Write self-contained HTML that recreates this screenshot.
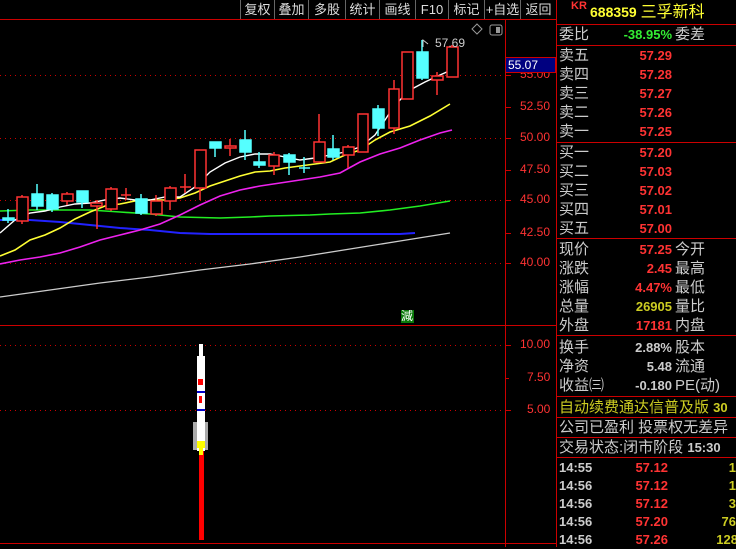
<!DOCTYPE html>
<html><head><meta charset="utf-8"><style>
*{margin:0;padding:0;box-sizing:border-box}
body{width:736px;height:547px;background:#000;overflow:hidden;position:relative;font-family:"Liberation Sans","Noto Sans CJK SC",sans-serif}
.a{position:absolute;white-space:nowrap}
.btn{position:absolute;top:0;height:19px;color:#ddd;font-size:13px;line-height:19px;text-align:center;border-left:1px solid #666}
.lab{position:absolute;left:559px;color:#ccc;font-size:15px;line-height:19px}
.num{position:absolute;font-weight:bold;font-size:13px;line-height:19px;text-align:right}
.r{color:#ff3333}.y{color:#cccc22}.w{color:#ccc}.g{color:#33ee33}
.hl{position:absolute;left:556px;width:180px;height:1px;background:#c00}
</style></head><body>
<svg class="a" style="left:0;top:0" width="736" height="547">
<g stroke="#c00" stroke-width="1">
<line x1="0" y1="19.5" x2="556" y2="19.5"/>
<line x1="505.5" y1="19" x2="505.5" y2="547"/>
<line x1="556.5" y1="0" x2="556.5" y2="547"/>
<line x1="0" y1="325.5" x2="556" y2="325.5"/>
<line x1="0" y1="543.5" x2="556" y2="543.5"/>
</g>
<g stroke="#c00" stroke-dasharray="1,4">
<line x1="0" y1="75.5" x2="505" y2="75.5"/><line x1="0" y1="138.5" x2="505" y2="138.5"/>
<line x1="0" y1="200.5" x2="505" y2="200.5"/><line x1="0" y1="263.5" x2="505" y2="263.5"/>
<line x1="0" y1="345.5" x2="505" y2="345.5"/><line x1="0" y1="410.5" x2="505" y2="410.5"/>
</g>
<g stroke="#c00"><line x1="505" y1="75.5" x2="511" y2="75.5"/><line x1="505" y1="107.5" x2="511" y2="107.5"/><line x1="505" y1="138.5" x2="511" y2="138.5"/><line x1="505" y1="170.5" x2="511" y2="170.5"/><line x1="505" y1="200.5" x2="511" y2="200.5"/><line x1="505" y1="233.5" x2="511" y2="233.5"/><line x1="505" y1="263.5" x2="511" y2="263.5"/><line x1="505" y1="345.5" x2="511" y2="345.5"/><line x1="505" y1="378.5" x2="509" y2="378.5"/><line x1="505" y1="410.5" x2="511" y2="410.5"/></g>
<g fill="none" stroke-width="1.3">
<polyline stroke="#ccc" points="0,297 50,290 100,283 150,277 200,270 250,264 300,257 350,249 400,241 450,233"/>
<polyline stroke="#2222ff" stroke-width="2" points="0,220 30,220 60,222 90,225 120,228 150,230 180,233 210,234 250,234 300,234 400,234 415,233"/>
<polyline stroke="#22ee22" stroke-width="1.6" points="0,211 30,210 60,210 90,210 120,212 150,214 180,217 220,218 250,217 270,216 310,215 330,214 360,213 390,210 420,206 450,201"/>
<polyline stroke="#ee22ee" stroke-width="1.6" points="0,264 20,260 40,257 60,253 80,247 100,240 120,235 140,230 160,224 180,215 200,205 220,196 240,190 260,186 280,183 300,180 320,177 340,173 360,162 380,154 400,148 420,140 440,133 452,130"/>
<polyline stroke="#ffff33" stroke-width="1.6" points="0,256 15,250 30,240 45,235 60,228 75,219 90,212 105,206 120,204 135,201 150,200 165,200 180,198 195,193 210,186 225,181 240,176 255,172 270,171 285,168 300,166 315,164 330,162 345,155 360,150 375,140 390,132 410,126 430,116 450,104"/>
<polyline stroke="#fff" stroke-width="1.4" points="0,233 15,220 30,213 45,211 60,207 75,204 90,203 105,200 120,198 135,200 150,200 165,197 180,197 195,187 210,172 225,163 240,157 255,154 270,154 285,157 300,160 315,158 330,155 345,152 360,147 375,135 385,120 395,105 410,90 425,82 440,75 458,67"/>
</g>
<g stroke="#ff3333" fill="#000" stroke-width="1.5">
<line x1="22" y1="195" x2="22" y2="224"/><rect x="17" y="197" width="11" height="24"/>
<line x1="67" y1="192" x2="67" y2="205"/><rect x="62" y="194" width="11" height="7"/>
<line x1="97" y1="200" x2="97" y2="229"/><rect x="91" y="203" width="11" height="3"/>
<line x1="111" y1="187" x2="111" y2="211"/><rect x="106" y="189" width="11" height="20"/>
<line x1="126" y1="188" x2="126" y2="200"/><line x1="121" y1="195" x2="131" y2="195"/>
<line x1="156" y1="195" x2="156" y2="216"/><rect x="151" y="201" width="11" height="13"/>
<line x1="170" y1="186" x2="170" y2="210"/><rect x="165" y="188" width="11" height="13"/>
<line x1="185" y1="174" x2="185" y2="193"/><line x1="180" y1="187" x2="191" y2="187"/>
<line x1="200" y1="150" x2="200" y2="200"/><rect x="195" y="150" width="11" height="38"/>
<line x1="230" y1="139" x2="230" y2="156"/><rect x="225" y="146" width="11" height="2"/>
<line x1="274" y1="152" x2="274" y2="175"/><rect x="269" y="155" width="10" height="11"/>
<line x1="319" y1="114" x2="319" y2="162"/><rect x="314" y="142" width="11" height="20"/>
<line x1="348" y1="145" x2="348" y2="168"/><rect x="343" y="147" width="11" height="8"/>
<rect x="358" y="114" width="10" height="38"/>
<line x1="394" y1="80" x2="394" y2="134"/><rect x="389" y="89" width="10" height="39"/>
<rect x="402" y="52" width="11" height="47"/>
<line x1="437" y1="72" x2="437" y2="95"/><rect x="432" y="76" width="11" height="4"/>
<line x1="452" y1="45" x2="452" y2="77"/><rect x="447" y="47" width="11" height="30"/>
</g>
<g stroke="#55ffff" fill="#55ffff" stroke-width="1.5">
<line x1="8" y1="209" x2="8" y2="223"/><rect x="3" y="218" width="11" height="2"/>
<line x1="37" y1="184" x2="37" y2="210"/><rect x="32" y="194" width="11" height="12"/>
<line x1="52" y1="193" x2="52" y2="212"/><rect x="47" y="195" width="11" height="14"/>
<line x1="82" y1="191" x2="82" y2="208"/><rect x="77" y="191" width="11" height="11"/>
<line x1="141" y1="194" x2="141" y2="215"/><rect x="136" y="199" width="11" height="14"/>
<line x1="215" y1="142" x2="215" y2="157"/><rect x="210" y="142" width="11" height="6"/>
<line x1="245" y1="130" x2="245" y2="160"/><rect x="240" y="140" width="11" height="12"/>
<line x1="259" y1="152" x2="259" y2="168"/><rect x="254" y="162" width="11" height="3"/>
<line x1="289" y1="153" x2="289" y2="175"/><rect x="284" y="155" width="11" height="7"/>
<line x1="304" y1="157" x2="304" y2="173"/><line x1="299" y1="168" x2="310" y2="168"/>
<line x1="333" y1="135" x2="333" y2="160"/><rect x="328" y="149" width="11" height="8"/>
<line x1="378" y1="105" x2="378" y2="136"/><rect x="373" y="109" width="11" height="19"/>
<line x1="422" y1="40" x2="422" y2="80"/><rect x="417" y="52" width="11" height="26"/>
</g>
<path d="M423 47 L423 40 L428 44" stroke="#ccc" fill="none"/>
<path d="M477 24 L482 29 L477 34 L472 29Z" stroke="#999" fill="none"/>
<rect x="490" y="25" width="12" height="10" rx="2" stroke="#999" fill="none"/><rect x="496" y="27" width="4" height="6" fill="#999"/>
<rect x="199" y="400" width="5" height="140" fill="#f00"/>
<rect x="193" y="422" width="15" height="28" fill="#aaa"/>
<rect x="197" y="356" width="8" height="95" fill="#fff"/>
<rect x="199" y="344" width="4" height="14" fill="#fff"/>
<rect x="198" y="379" width="5" height="6" fill="#f00"/>
<rect x="199" y="396" width="3" height="7" fill="#f00"/>
<rect x="197" y="391" width="8" height="2" fill="#00c"/><rect x="197" y="409" width="8" height="2" fill="#00c"/>
<rect x="197" y="441" width="8" height="7" fill="#ff0"/><rect x="199" y="448" width="4" height="7" fill="#ff0"/>
<rect x="401" y="310" width="13" height="13" fill="#0a7a0a"/>
</svg>
<div class="a" style="left:401px;top:309px;font-size:12px;color:#fff;line-height:14px">減</div>
<div class="a" style="left:435px;top:36px;color:#ccc;font-size:12px">57.69</div>
<div class="a" style="left:520px;top:67px;font-size:12px;color:#f33">55.00</div>
<div class="a" style="left:505px;top:57px;width:51px;height:16px;background:#000080;border:1px solid #c00;color:#fff;font-size:12px;line-height:14px;padding-left:2px">55.07</div>
<div class="a" style="left:520px;top:99px;font-size:12px;color:#f33">52.50</div>
<div class="a" style="left:520px;top:130px;font-size:12px;color:#f33">50.00</div>
<div class="a" style="left:520px;top:162px;font-size:12px;color:#f33">47.50</div>
<div class="a" style="left:520px;top:192px;font-size:12px;color:#f33">45.00</div>
<div class="a" style="left:520px;top:225px;font-size:12px;color:#f33">42.50</div>
<div class="a" style="left:520px;top:255px;font-size:12px;color:#f33">40.00</div>
<div class="a" style="left:520px;top:337px;font-size:12px;color:#f33">10.00</div>
<div class="a" style="left:527px;top:370px;font-size:12px;color:#f33">7.50</div>
<div class="a" style="left:527px;top:402px;font-size:12px;color:#f33">5.00</div>
<div class="btn" style="left:240px;width:34px">复权</div>
<div class="btn" style="left:274px;width:34px">叠加</div>
<div class="btn" style="left:308px;width:37px">多股</div>
<div class="btn" style="left:345px;width:34px">统计</div>
<div class="btn" style="left:379px;width:36px">画线</div>
<div class="btn" style="left:415px;width:33px">F10</div>
<div class="btn" style="left:448px;width:36px">标记</div>
<div class="btn" style="left:484px;width:36px">+自选</div>
<div class="btn" style="left:520px;width:36px">返回</div>
<div class="a" style="left:571px;top:0;color:#f33;font-size:11px;font-weight:bold">KR</div>
<div class="a" style="left:590px;top:3px;color:#ff3;font-size:14px;font-weight:bold;line-height:18px">688359 <span style="font-weight:normal;font-size:16px">三孚新科</span></div>
<div class="hl" style="top:24px"></div>
<div class="lab" style="top:25px">委比</div><div class="num g" style="left:600px;width:72px;top:25px">-38.95%</div><div class="lab" style="left:675px;top:25px">委差</div>
<div class="hl" style="top:45px"></div>
<div class="lab" style="top:46px">卖五</div><div class="num r" style="left:600px;width:72px;top:46px">57.29</div>
<div class="lab" style="top:65px">卖四</div><div class="num r" style="left:600px;width:72px;top:65px">57.28</div>
<div class="lab" style="top:84px">卖三</div><div class="num r" style="left:600px;width:72px;top:84px">57.27</div>
<div class="lab" style="top:103px">卖二</div><div class="num r" style="left:600px;width:72px;top:103px">57.26</div>
<div class="lab" style="top:122px">卖一</div><div class="num r" style="left:600px;width:72px;top:122px">57.25</div>
<div class="hl" style="top:142px"></div>
<div class="lab" style="top:143px">买一</div><div class="num r" style="left:600px;width:72px;top:143px">57.20</div>
<div class="lab" style="top:162px">买二</div><div class="num r" style="left:600px;width:72px;top:162px">57.03</div>
<div class="lab" style="top:181px">买三</div><div class="num r" style="left:600px;width:72px;top:181px">57.02</div>
<div class="lab" style="top:200px">买四</div><div class="num r" style="left:600px;width:72px;top:200px">57.01</div>
<div class="lab" style="top:219px">买五</div><div class="num r" style="left:600px;width:72px;top:219px">57.00</div>
<div class="hl" style="top:238px"></div>
<div class="lab" style="top:240px">现价</div><div class="num r" style="left:600px;width:72px;top:240px">57.25</div><div class="lab" style="left:675px;top:240px">今开</div>
<div class="lab" style="top:259px">涨跌</div><div class="num r" style="left:600px;width:72px;top:259px">2.45</div><div class="lab" style="left:675px;top:259px">最高</div>
<div class="lab" style="top:278px">涨幅</div><div class="num r" style="left:600px;width:72px;top:278px">4.47%</div><div class="lab" style="left:675px;top:278px">最低</div>
<div class="lab" style="top:297px">总量</div><div class="num y" style="left:600px;width:72px;top:297px">26905</div><div class="lab" style="left:675px;top:297px">量比</div>
<div class="lab" style="top:316px">外盘</div><div class="num r" style="left:600px;width:72px;top:316px">17181</div><div class="lab" style="left:675px;top:316px">内盘</div>
<div class="hl" style="top:335px"></div>
<div class="lab" style="top:338px">换手</div><div class="num w" style="left:600px;width:72px;top:338px">2.88%</div><div class="lab" style="left:675px;top:338px">股本</div>
<div class="lab" style="top:357px">净资</div><div class="num w" style="left:600px;width:72px;top:357px">5.48</div><div class="lab" style="left:675px;top:357px">流通</div>
<div class="lab" style="top:376px">收益㈢</div><div class="num w" style="left:600px;width:72px;top:376px">-0.180</div><div class="lab" style="left:675px;top:376px">PE(动)</div>
<div class="hl" style="top:396px"></div>
<div class="lab y" style="top:398px;color:#cccc22">自动续费通达信普及版 <b style="font-size:13px">30</b></div>
<div class="hl" style="top:417px"></div>
<div class="lab" style="top:418px">公司已盈利 投票权无差异</div>
<div class="hl" style="top:437px"></div>
<div class="lab" style="top:438px">交易状态:闭市阶段 <b style="font-size:13px">15:30</b></div>
<div class="hl" style="top:457px"></div>
<div class="num w" style="left:559px;top:458px">14:55</div><div class="num r" style="left:600px;width:68px;top:458px">57.12</div><div class="num y" style="left:700px;width:36px;top:458px">1</div>
<div class="num w" style="left:559px;top:476px">14:56</div><div class="num r" style="left:600px;width:68px;top:476px">57.12</div><div class="num y" style="left:700px;width:36px;top:476px">1</div>
<div class="num w" style="left:559px;top:494px">14:56</div><div class="num r" style="left:600px;width:68px;top:494px">57.12</div><div class="num y" style="left:700px;width:36px;top:494px">3</div>
<div class="num w" style="left:559px;top:512px">14:56</div><div class="num r" style="left:600px;width:68px;top:512px">57.20</div><div class="num y" style="left:700px;width:36px;top:512px">76</div>
<div class="num w" style="left:559px;top:530px">14:56</div><div class="num r" style="left:600px;width:68px;top:530px">57.26</div><div class="num y" style="left:700px;width:38px;top:530px">128</div>
</body></html>
